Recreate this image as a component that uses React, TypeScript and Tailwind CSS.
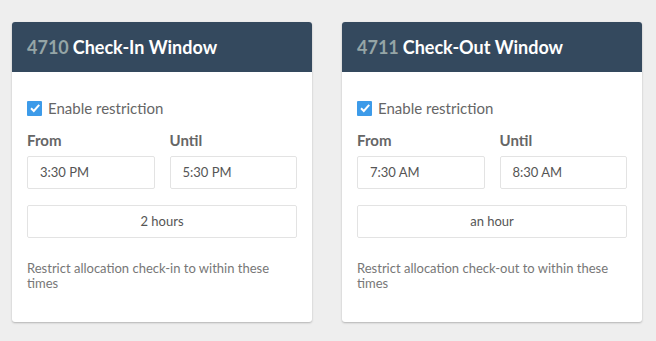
import React from "react";

type Win = {
  id: string;
  title: string;
  from: string;
  until: string;
  span: string;
  note: string;
};

const windows: Win[] = [
  {
    id: "4710",
    title: "Check-In Window",
    from: "3:30 PM",
    until: "5:30 PM",
    span: "2 hours",
    note: "Restrict allocation check-in to within these times",
  },
  {
    id: "4711",
    title: "Check-Out Window",
    from: "7:30 AM",
    until: "8:30 AM",
    span: "an hour",
    note: "Restrict allocation check-out to within these times",
  },
];

function Check() {
  return (
    <span className="flex h-[15px] w-[15px] items-center justify-center rounded-[1px] bg-[#3d9be9]">
      <svg width="12" height="12" viewBox="0 0 12 12">
        <path d="M2 6.2 L4.8 9 L10.2 2.8" fill="none" stroke="white" strokeWidth="2" />
      </svg>
    </span>
  );
}

function Card({ w }: { w: Win }) {
  return (
    <div className="h-[300px] w-[300px] rounded-[3px] bg-white shadow-[0_1px_2px_rgba(0,0,0,0.25)] overflow-hidden">
      <div className="flex h-[50px] items-center bg-[#34495e] px-[15px] text-[18px] font-bold">
        <span className="text-[#95a5a6]">{w.id}</span>
        <span className="ml-[4px] text-white">{w.title}</span>
      </div>

      <div className="px-[15px] pt-[25px]">
        <label className="flex items-center gap-[6px] text-[15px] text-[#666]">
          <Check />
          Enable restriction
        </label>

        <div className="mt-[11px] grid grid-cols-2 gap-[15px]">
          {[
            ["From", w.from],
            ["Until", w.until],
          ].map(([label, value]) => (
            <div key={label}>
              <p className="text-[15px] font-bold leading-[18px] text-[#666]">{label}</p>
              <div className="mt-[7px] flex h-[33px] items-center rounded-[2px] border border-[#e3e3e3] px-[12px] pt-[1px] text-[13px] text-[#555]">
                {value}
              </div>
            </div>
          ))}
        </div>

        <div className="mt-[16px] flex h-[33px] items-center justify-center rounded-[2px] border border-[#e3e3e3] pt-[1px] text-[13px] text-[#555]">
          {w.span}
        </div>

        <p className="mt-[23px] text-[13px] leading-[15px] text-[#777]">{w.note}</p>
      </div>
    </div>
  );
}

export default function App() {
  return (
    <main
      className="flex min-h-[341px] gap-[30px] bg-[#eeeeee] px-[12px] pt-[22px]"
      style={{ fontFamily: "Lato, 'Liberation Sans', sans-serif" }}
    >
      {windows.map((w) => (
        <Card key={w.id} w={w} />
      ))}
    </main>
  );
}
